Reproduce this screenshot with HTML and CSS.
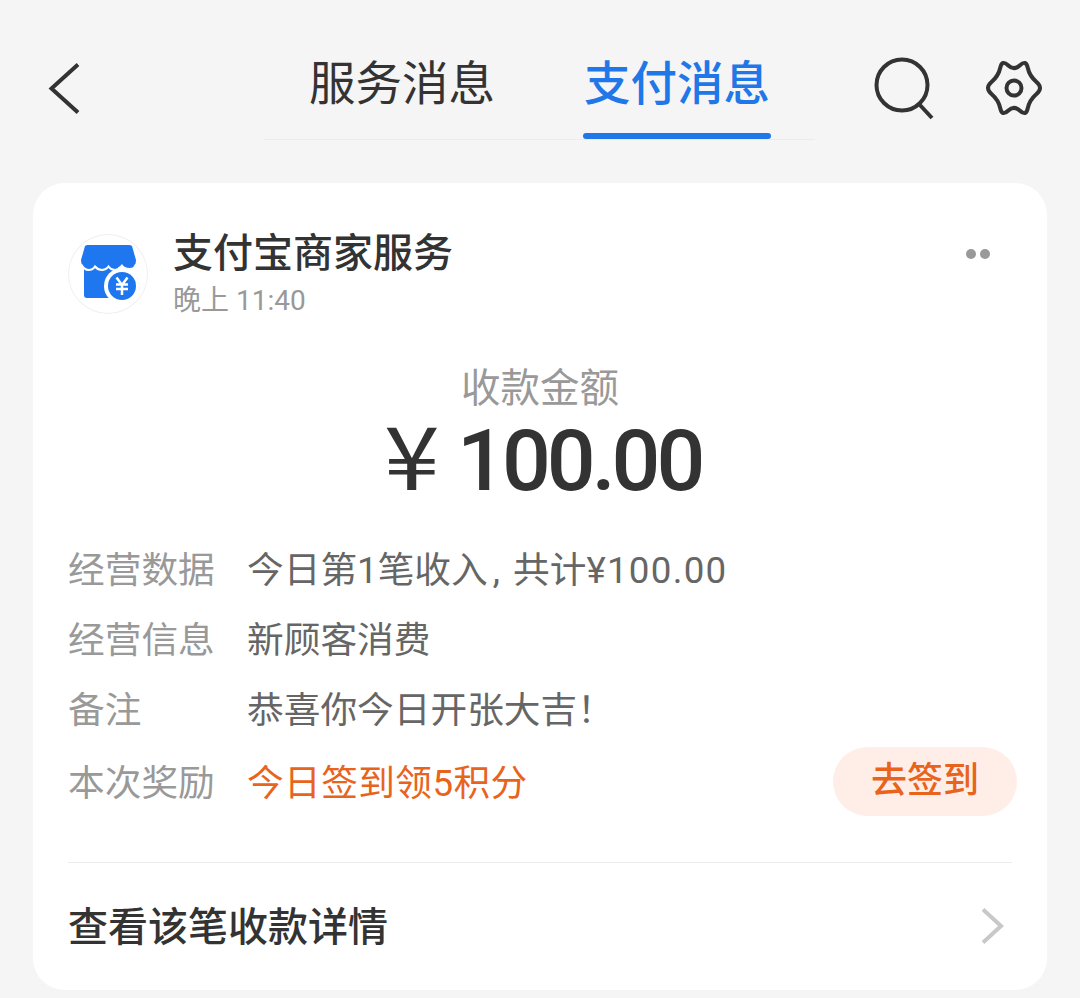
FILE: index.html
```html
<!DOCTYPE html>
<html lang="zh">
<head>
<meta charset="UTF-8">
<title>支付消息</title>
<link rel="stylesheet" href="styles.css">
</head>
<body>
	<header class="topbar">
		<svg class="icon_retour" width="32" height="52" viewBox="0 0 32 52"><path d="M30 1.500 L3.500 25.500 L30 49.500" fill="none" stroke="#333" stroke-width="4"/></svg>
		<nav class="onglets">
			<span class="onglet">服务消息</span>
			<span class="onglet onglet_actif">支付消息</span>
		</nav>
		<svg class="icon_recherche" width="62" height="64" viewBox="0 0 62 64"><circle cx="28" cy="28" r="25.5" fill="none" stroke="#333" stroke-width="4"/><path d="M45 47 L58 61" fill="none" stroke="#333" stroke-width="4"/></svg>
		<svg class="icon_reglage" width="60" height="60" viewBox="-30 -30 60 60"><path d="M22.5 6 Q15.5 12 13.75 20.25 Q12 28.500 6 22.75 Q0 17 -6 22.75 Q-12 28.500 -13.75 20.25 Q-15.5 12 -22.5 6 Q-29.500 0 -22.5 -6 Q-15.5 -12 -13.75 -20.25 Q-12 -28.500 -6 -22.75 Q0 -17 6 -22.75 Q12 -28.500 13.75 -20.25 Q15.5 -12 22.5 -6 Q29.500 0 22.5 6 Z" fill="none" stroke="#333" stroke-width="4" stroke-linejoin="round"/><circle r="7.5" fill="none" stroke="#333" stroke-width="4"/></svg>
	</header>

	<main class="carte">
		<div class="entete">
			<div class="logo">
				<svg width="80" height="80" viewBox="0 0 80 80">
					<path d="M16 30 H50 V64 H19 Q16 64 16 61 Z" fill="#1f77f0"/>
					<path d="M17 12 Q18 11 20 11 H61 Q63 11 64 12 L68 26 Q68 34 62 34 Q56 34 54 30 Q51 34 47 34 Q43 34 40.500 30 Q38 34 34 34 Q30 34 27 30 Q25 34 19 34 Q13 34 13 26 Z" fill="#1f77f0"/>
					<path d="M13 30 Q16 36 20.500 36 Q25 36 27 32.500 Q30 36 34 36 Q38 36 40.500 32.500 Q43 36 47 36 Q51 36 54 32.500 Q57 36 62 36 Q66 36 68 30" fill="none" stroke="#fff" stroke-width="2"/>
					<circle cx="54" cy="52" r="18" fill="#fff"/>
					<circle cx="54" cy="52" r="14" fill="#1f77f0"/>
					<path d="M48.500 43.500 L54 51 L59.500 43.500 M54 51 V61 M48 50.500 H60 M48 55 H60" fill="none" stroke="#fff" stroke-width="2.500"/>
				</svg>
			</div>
			<div class="expediteur">
				<div class="nom">支付宝商家服务</div>
				<div class="heure">晚上 11:40</div>
			</div>
			<div class="points"><i></i><i></i></div>
		</div>

		<div class="montant">
			<div class="montant_titre">收款金额</div>
			<div class="montant_valeur"><span class="yen">¥</span>100.00</div>
		</div>

		<div class="lignes">
			<div class="ligne"><span class="libelle">经营数据</span><span class="valeur">今日第1笔收入<span class="virgule">,</span>共计<span class="somme">¥100.00</span></span></div>
			<div class="ligne"><span class="libelle">经营信息</span><span class="valeur">新顾客消费</span></div>
			<div class="ligne"><span class="libelle">备注</span><span class="valeur">恭喜你今日开张大吉！</span></div>
			<div class="ligne ligne_bonus"><span class="libelle">本次奖励</span><span class="valeur valeur_bonus">今日签到领5积分</span><span class="bouton">去签到</span></div>
		</div>

		<div class="pied">
			<span class="pied_texte">查看该笔收款详情</span>
			<svg width="24" height="36" viewBox="0 0 24 36"><path d="M1 1.500 L19 18 L1 34.500" fill="none" stroke="#c8c8c8" stroke-width="4"/></svg>
		</div>
	</main>
</body>
</html>
```

FILE: styles.css
```css
html
{
	height : 100%;
}

body
{
	margin : 0;
	height : 998px;
	overflow : hidden;
	background : #f5f5f5;
	font-family : Roboto, "Noto Sans CJK SC", sans-serif;
}

.topbar
{
	display : flex;
	align-items : flex-start;
	height : 140px;
	margin-bottom : 43px;
}

.icon_retour
{
	margin : 63px 0 0 48px;
	flex : none;
}

.onglets
{
	display : flex;
	align-items : flex-start;
	gap : 88px;
	width : 506px;
	height : 139px;
	margin-left : 184px;
	padding-left : 45px;
	border-bottom : 1px solid #ececec;
}

.onglet
{
	font-size : 46.5px;
	line-height : 60px;
	margin-top : 54px;
	color : #333;
}

.onglet_actif
{
	width : 188px;
	text-align : center;
	font-weight : 500;
	color : #1f77e8;
}

.onglet_actif::after
{
	content : "";
	display : block;
	height : 6px;
	margin-top : 19px;
	border-radius : 3px;
	background : #1f77e8;
}

.icon_recherche
{
	margin : 57px 0 0 59px;
	flex : none;
}

.icon_reglage
{
	margin : 58px 0 0 48px;
	flex : none;
}

.carte
{
	width : 1014px;
	height : 807px;
	margin-left : 33px;
	background : #fff;
	border-radius : 32px;
	box-sizing : border-box;
	padding : 51px 35px 0 35px;
}

.entete
{
	display : flex;
	align-items : flex-start;
}

.logo
{
	width : 80px;
	height : 80px;
	border-radius : 50%;
	box-shadow : inset 0 0 0 1px #f0f0f0;
	flex : none;
}

.expediteur
{
	margin-left : 25px;
	flex : 1;
}

.nom
{
	font-size : 40px;
	line-height : 44px;
	font-weight : 500;
	color : #333;
	margin-top : -2px;
}

.heure
{
	font-size : 28px;
	line-height : 34px;
	color : #999;
	margin-top : 8px;
}

.points
{
	display : flex;
	gap : 4px;
	margin : 15px 22px 0 0;
}

.points i
{
	width : 10px;
	height : 10px;
	border-radius : 50%;
	background : #999;
}

.montant
{
	text-align : center;
	margin-top : 44px;
	margin-left : -35px;
	margin-right : -35px;
}

.montant_titre
{
	font-size : 39.5px;
	line-height : 54px;
	color : #999;
}

.montant_valeur
{
	font-size : 86px;
	line-height : 90px;
	font-weight : 500;
	letter-spacing : -4px;
	color : #333;
	margin-top : -9px;
	padding-left : 5px;
}

.yen
{
	display : inline-block;
	margin-right : 29px;
	font-family : "Noto Sans CJK SC", sans-serif;
	font-size : 87px;
	font-weight : 400;
	transform : scaleX(1.15);
	transform-origin : left center;
}

.lignes
{
	margin-top : 26px;
}

.ligne
{
	display : flex;
	align-items : center;
	height : 70px;
}

.ligne_bonus
{
	height : 76px;
}

.libelle
{
	width : 179px;
	font-size : 36.7px;
	color : #999;
	flex : none;
}

.valeur
{
	font-size : 36.7px;
	color : #666;
}

.virgule
{
	margin : 0 13px 0 5px;
}

.somme
{
	letter-spacing : 1.3px;
}

.valeur_bonus
{
	flex : 1;
	letter-spacing : 0.4px;
	color : #e8641c;
}

.bouton
{
	width : 184px;
	height : 69px;
	line-height : 69px;
	margin : 2px -5px 0 0;
	text-align : center;
	border-radius : 35px;
	background : #ffeee8;
	color : #e8641c;
	font-size : 36px;
	font-weight : 500;
	flex : none;
}

.pied
{
	display : flex;
	align-items : center;
	justify-content : space-between;
	height : 125px;
	margin-top : 44px;
	padding-right : 6px;
	border-top : 1px solid #ededed;
}

.pied_texte
{
	font-size : 40px;
	font-weight : 500;
	color : #333;
	margin-top : -4px;
}
```
